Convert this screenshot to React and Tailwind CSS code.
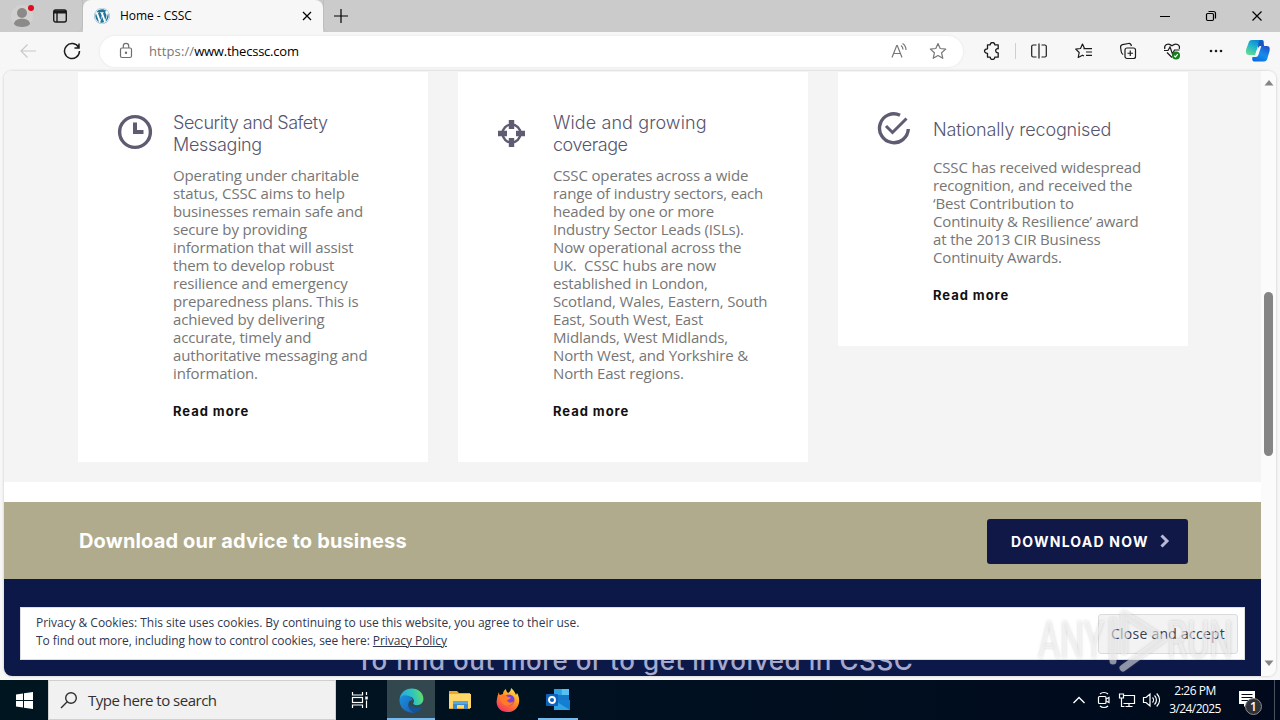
import React from 'react';
import { FaWordpress } from 'react-icons/fa';

const CARDS = [
  {
    id: 'security',
    icon: 'clock',
    title: [['Security and Safety', 'tracking-[-0.48px]'], ['Messaging', 'tracking-[-0.3px]']],
    body: [
      'Operating under charitable', 'status, CSSC aims to help', 'businesses remain safe and', 'secure by providing',
      'information that will assist', 'them to develop robust', 'resilience and emergency', 'preparedness plans. This is',
      'achieved by delivering', 'accurate, timely and', 'authoritative messaging and', 'information.',
    ],
  },
  {
    id: 'coverage',
    icon: 'target',
    title: [['Wide and growing', 'tracking-[0.1px]'], ['coverage', 'tracking-[-0.45px]']],
    body: [
      'CSSC operates across a wide', 'range of industry sectors, each', 'headed by one or more', 'Industry Sector Leads (ISLs).',
      'Now operational across the', 'UK.\u00a0 CSSC hubs are now', 'established in London,', 'Scotland, Wales, Eastern, South',
      'East, South West, East', 'Midlands, West Midlands,', 'North West, and Yorkshire &', 'North East regions.',
    ],
  },
  {
    id: 'recognised',
    icon: 'check',
    title: [['Nationally recognised', 'tracking-[-0.15px]']],
    body: [
      'CSSC has received widespread', 'recognition, and received the', '‘Best Contribution to', 'Continuity & Resilience’ award',
      'at the 2013 CIR Business', 'Continuity Awards.',
    ],
  },
];

const Icon = ({ w = 20, h = w, className = '', children, ...rest }) => (
  <svg width={w} height={h} viewBox={`0 0 ${w} ${h}`} fill="none" stroke="currentColor" strokeWidth="1.2" className={`shrink-0 ${className}`} {...rest}>
    {children}
  </svg>
);

const CardIcon = ({ type }) => {
  if (type === 'clock') {
    return (
      <Icon w={36} className="mt-[42px] ml-[39px]" strokeWidth="3.4">
        <circle cx="18" cy="18" r="15.4" />
        <path d="M18 8.500v9.500h8.500" strokeWidth="4" />
      </Icon>
    );
  }
  if (type === 'target') {
    return (
      <Icon w={36} className="mt-[43px] ml-[35px]" strokeWidth="2.4">
        <circle cx="18.5" cy="18.5" r="9" />
        <path d="M18.5 5v9M18.5 23v9M5 18.5h9M23 18.5h9" strokeWidth="5.4" />
      </Icon>
    );
  }
  return (
    <Icon w={36} className="mt-[39px] ml-[39px]" strokeWidth="3.4">
      <path d="M23 4.2A14.4 14.4 0 1 0 31.3 18" />
      <path d="M9 15l6.500 6.500L29.500 7.500" strokeWidth="3" />
    </Icon>
  );
};

const Card = ({ card }) => {
  const single = card.title.length === 1;
  return (
    <div className={`flex w-[350px] bg-white ${single ? 'h-[274px]' : 'h-[390px]'}`}>
      <div className="w-[95px] shrink-0 text-[#5d5c70]">
        <CardIcon type={card.icon} />
      </div>
      <div className={`whitespace-nowrap ${single ? 'pt-[47px]' : 'pt-10'}`}>
        <h3 className="font-[Inter] text-[18px] leading-[22px] font-light text-[#56556e]">
          {card.title.map(([line, tracking]) => <div key={line} className={tracking}>{line}</div>)}
        </h3>
        <div className={`text-[15px] leading-[18px] tracking-[-0.15px] text-[#767676] ${single ? 'mt-[17px]' : 'mt-[10px]'}`}>
          {card.body.map(line => <div key={line}>{line}</div>)}
        </div>
        <a className="mt-[19px] block font-[Inter] text-[13px] leading-[20px] font-bold tracking-[0.95px] text-[#111]">Read more</a>
      </div>
    </div>
  );
};

const TabStrip = () => (
  <div className="flex h-8 bg-[#cbcbcb]">
    <div className="flex w-[83px] items-center rounded-br-md border-r border-[#bdbdbd]">
      <Icon w={30} className="ml-[8px]" stroke="none">
        <circle cx="14" cy="15" r="11" fill="#d2d1d0" />
        <circle cx="14" cy="12" r="5" fill="#8c8a89" />
        <path d="M6 23c0-7 16-7 16 0-2 4-14 4-16 0z" fill="#8c8a89" />
        <circle cx="23" cy="7" r="3" fill="#e00b1c" />
      </Icon>
      <Icon w={16} className="ml-[14px] text-[#1b1b1b]" strokeWidth="1.4">
        <rect x="1.7" y="2" width="12.6" height="12" rx="2" />
        <path d="M2 4h12" strokeWidth="3" />
        <path d="M5 4v10" />
      </Icon>
    </div>
    <div className="flex w-[240px] items-center rounded-t-lg bg-[#f7f7f7] text-xs text-black">
      <span className="ml-[11px] rounded-full bg-white"><FaWordpress size={16} color="#21759b" /></span>
      <span className="ml-[10px] w-[180px] whitespace-nowrap tracking-[-0.05px]">Home - CSSC</span>
      <Icon w={10} className="ml-[2px]"><path d="M1 1l8 8M9 1L1 9" /></Icon>
    </div>
    <div className="flex flex-1 items-center rounded-bl-md border-l border-[#bdbdbd] pl-[9px]">
      <Icon w={16}><path d="M1 8h14M8 1v14" /></Icon>
    </div>
    <div className="flex w-[138px] items-center text-black">
      <div className="flex w-[46px] justify-center"><Icon w={12}><path d="M1 6.5h10" strokeWidth="1" /></Icon></div>
      <div className="flex w-[46px] justify-center">
        <Icon w={12}>
          <rect x="1.5" y="3.5" width="7" height="7" rx="1.2" />
          <path d="M3.5 1.5H8.5a2 2 0 0 1 2 2v5" />
        </Icon>
      </div>
      <div className="flex w-[46px] justify-center"><Icon w={12}><path d="M1.5 1.5l9 9M10.5 1.5l-9 9" /></Icon></div>
    </div>
  </div>
);

const Star = () => <path d="M9 1.5l2.2 5 5.5.6-4.1 3.7 1.2 5.5L9 13.5l-4.8 2.8 1.2-5.5L1.3 7.1l5.5-.6z" strokeLinejoin="round" />;

const Toolbar = () => (
  <div className="flex h-[38px] items-center bg-[#f7f7f7] text-[#1b1b1b]">
    <Icon w={18} className="ml-[19px] text-[#c8c8c8]"><path d="M17 9H2M8.5 2.5L2 9l6.5 6.5" /></Icon>
    <Icon w={18} className="ml-[26px]" strokeWidth="1.5"><path d="M15.6 5.500A7.500 7.500 0 1 0 16.500 9M16 1.500v4.500h-4.500" /></Icon>
    <div className="ml-[19px] flex h-[31px] w-[863px] items-center rounded-full bg-white shadow-[0_0_2px_1px_rgba(0,0,0,0.04)]">
      <Icon w={14} h={18} className="ml-[19px] text-[#6f6f6f]">
        <rect x="1.5" y="6" width="11" height="9.5" rx="1.5" />
        <path d="M4.3 6V4a2.7 2.7 0 0 1 5.4 0v2" />
        <circle cx="7" cy="10.8" r=".6" fill="currentColor" />
      </Icon>
      <span className="mt-px ml-[16px] w-[741px] text-[13px] whitespace-nowrap text-black">
        <span className="tracking-[0.1px] text-[#777]">https://</span><span className="tracking-[-0.22px]">www.thecssc.com</span>
      </span>
      <Icon w={18} className="text-[#777]">
        <path d="M2 15.500L6.700 3.500h.6l4.700 12M3.700 11.500h6.600M11 3.500c1.500 1 2 2.500 2 4M12.500 1.500c2.500 1.500 3.500 4 3.500 6.500" />
      </Icon>
      <Icon w={18} className="ml-[21px] text-[#777]"><Star /></Icon>
    </div>
    <Icon w={18} className="ml-[20px]" strokeWidth="1.3">
      <path d="M4.500 2.800h2.700a2.300 2.300 0 0 1 4.600 0h3.400v4c-3.400-.8-3.400 4.300 0 4v4.400H11.800a2.300 2.300 0 0 1-4.600 0H4.500V11.300c-4 0-4-4.500 0-4.500z" strokeLinejoin="round" />
    </Icon>
    <div className="ml-[14px] h-4 w-px bg-[#cfcfcf]" />
    <div className="ml-[1px] flex w-11 justify-center">
      <Icon w={18}><path d="M6.5 3H3.200A1.500 1.500 0 0 0 1.700 4.500v9A1.500 1.500 0 0 0 3.200 15H6.500M9 1.500v15M11.500 3h3.300a1.500 1.500 0 0 1 1.500 1.500v9a1.500 1.500 0 0 1-1.500 1.500H11.500" /></Icon>
    </div>
    <div className="ml-px flex w-11 justify-center">
      <Icon w={18}><path d="M9.500 6.500L7.500 2 5.500 6.500l-4.800.6L4.200 10.500l-1 5 4.300-2.300 1.500.8M8.500 6.700H17M11 10h6M11 13.300h6" strokeLinejoin="round" /></Icon>
    </div>
    <div className="flex w-11 justify-center">
      <Icon w={18}>
        <rect x="6" y="6" width="10.500" height="10.500" rx="2" />
        <path d="M11.250 8.500v5.500M8.500 11.250H14M4.200 12.500C3 12 2.500 11 2.300 10L1.600 5.500C1.400 4 2 3 3.500 2.700L9.500 1.500c1.500-.2 2.500.5 3 2.500" />
      </Icon>
    </div>
    <div className="flex w-11 justify-center">
      <Icon w={18}>
        <path d="M1.800 7C.8 3 5 .2 9 3.800 13 .2 17.500 3 16.200 7M4 10.500L9 15.500M1 8.500h4l2-3.500 2.500 7L11.500 8h5" />
        <circle cx="13" cy="13.500" r="4" fill="#14801d" stroke="none" />
        <path d="M11.200 13.700l1.300 1.200 2.300-2.700" stroke="#fff" />
      </Icon>
    </div>
    <div className="flex w-11 justify-center">
      <Icon w={16} stroke="none" fill="currentColor"><circle cx="3" cy="8" r="1.300" /><circle cx="8" cy="8" r="1.300" /><circle cx="13" cy="8" r="1.300" /></Icon>
    </div>
    <svg width="26" height="24" viewBox="0 0 26 24" className="ml-[7px]">
      <defs>
        <linearGradient id="cpA" x1=".8" y1="0" x2=".2" y2="1"><stop stopColor="#087bd5" /><stop offset=".5" stopColor="#21b5cf" /><stop offset="1" stopColor="#65dd8d" /></linearGradient>
        <linearGradient id="cpB" x1=".8" y1="0" x2=".2" y2="1"><stop stopColor="#2450cd" /><stop offset=".5" stopColor="#168ee9" /><stop offset="1" stopColor="#0868e7" /></linearGradient>
      </defs>
      <path d="M7 1h10c2 0 2 2 1.500 3L18 6h-3c-2 0-2.500 2-3 4l-2 6H4C1 16 .5 13 1.300 10L3.500 4C4 2 5 1 7 1z" fill="url(#cpA)" />
      <path d="M19 22.500H9.500C7 22.500 7 20 7.500 18h3c2.500 0 3-2 3.500-4l2.300-7H22c3 0 3 3 2.500 5l-2 7c-.6 2-1.500 3.500-3.500 3.500z" fill="url(#cpB)" />
      <path d="M16 1c2.500 0 2.600 3 3.200 6h-3.500c-2 0-2.700 2-3.200 4l1-7c.3-2 .8-3 2.500-3z" fill="#1758bf" />
    </svg>
  </div>
);

const Scrollbar = () => (
  <div className="flex w-[15px] flex-col items-center bg-[#fbfbfb]">
    <svg width="10" height="6" viewBox="0 0 10 6" className="mt-[9px]"><path d="M5 0l4.500 5.500h-9z" fill="#858585" /></svg>
    <div className="mt-[206px] h-[164px] w-[9px] rounded-full bg-[#858585]" />
    <svg width="10" height="6" viewBox="0 0 10 6" className="mt-[204px]"><path d="M5 6L.5.500h9z" fill="#858585" /></svg>
  </div>
);

const Page = () => (
  <div className="relative flex w-[1257px] flex-col bg-white">
    <div className="flex h-[411px] shrink-0 items-start gap-[30px] bg-[#f4f4f4] pt-px pl-[74px]">
      {CARDS.map(card => <Card key={card.id} card={card} />)}
    </div>
    <div className="mt-5 flex h-[77px] shrink-0 items-center justify-between bg-[#b0ab8d] pr-[73px] pl-[75px]">
      <h2 className="font-[Inter] text-[20px] font-bold tracking-[0.15px] whitespace-nowrap text-white">Download our advice to business</h2>
      <div className="mt-px flex h-[45px] w-[201px] items-center rounded-[3px] bg-[#101848] pl-6 text-white">
        <span className="w-[137px] font-[Inter] text-[14px] font-bold tracking-[1.22px] whitespace-nowrap">DOWNLOAD NOW</span>
        <Icon w={10} h={14} className="ml-[12px] text-[#b9bad6]" strokeWidth="3"><path d="M1.5 1.500L7 7l-5.500 5.500" /></Icon>
      </div>
    </div>
    <div className="flex-1 bg-[#0c1848] pt-[65px] pl-[352px]">
      <div className="font-[Inter] text-[26px] leading-[34px] font-medium tracking-[0.55px] whitespace-nowrap text-[#a6aacd]">To find out more or to get involved in CSSC</div>
    </div>
    {/* Cookie notice floats over the footer */}
    <div className="absolute right-4 bottom-4 left-4 flex h-[53px] items-center justify-between border border-[#dedede] bg-white pr-[6px] pl-[15px] text-xs leading-[18px] text-[#2f3850]">
      <div className="-mt-[3px] whitespace-nowrap">
        <div className="tracking-[-0.02px]">Privacy &amp; Cookies: This site uses cookies. By continuing to use this website, you agree to their use.</div>
        <div className="tracking-[-0.065px]">To find out more, including how to control cookies, see here: <span className="underline">Privacy Policy</span></div>
      </div>
      <button className="h-[40px] w-[140px] rounded-[3px] border border-[#dcdcdc] bg-[#f3f3f3] text-[14px] tracking-[0.25px] whitespace-nowrap text-[#3a4150]">Close and accept</button>
    </div>
  </div>
);

const Watermark = () => (
  <svg width="206" height="68" viewBox="0 0 206 68" className="absolute top-[607px] left-[1036px] [filter:drop-shadow(0_0_1.5px_rgba(90,90,100,0.5))]">
    <g fill="#fff" fillOpacity=".5" fontFamily="Roboto, sans-serif" fontSize="52" fontWeight="400">
      <text x="2" y="51" textLength="66" lengthAdjust="spacingAndGlyphs">ANY</text>
      <text x="131" y="51" textLength="66" lengthAdjust="spacingAndGlyphs">RUN</text>
    </g>
    <g fill="none" stroke="#fff" strokeOpacity=".5" strokeWidth="7" strokeLinejoin="round" strokeLinecap="round">
      <path d="M88 44V7l39 25-40 29" />
      <path d="M77 14v40" />
    </g>
  </svg>
);

const TaskButton = ({ className = 'w-[49px]', children }) => (
  <div className={`flex h-10 items-center justify-center ${className}`}>{children}</div>
);

const Taskbar = () => (
  <div className="flex h-10 items-center bg-linear-to-r from-[#00161f] via-[#001020] to-[#000a1c] text-white">
    <div className="flex w-12 justify-center">
      <svg width="17" height="17" viewBox="0 0 17 17" fill="#fff"><path d="M0 2.500l7-1V8H0zM8 1.300L17 0v8H8zM0 9h7v6.500l-7-1zM8 9h9v8l-9-1.300z" /></svg>
    </div>
    <div className="flex h-10 w-[288px] items-center border border-[#d0d0d0] bg-[#f1f1f1] text-[#303030]">
      <Icon w={18} className="ml-[11px]" strokeWidth="1.4"><circle cx="11" cy="7" r="5.300" /><path d="M7.200 10.800L1 17" /></Icon>
      <span className="ml-[10px] text-[15px] tracking-[-0.5px] whitespace-nowrap">Type here to search</span>
    </div>
    <div className="flex w-[51px] justify-center pr-[4px]">
      <Icon w={18} strokeWidth="1.2">
        <path d="M1.500 1v3h10V1M1.500 17v-3h10v3M15.500 1v3M15.500 9.500V17" />
        <rect x="1.500" y="6.500" width="10" height="5" />
        <path d="M15.500 5.500v3" strokeWidth="2.500" />
      </Icon>
    </div>
    <TaskButton className="w-[48px] border-b-2 border-[#76b9ed] bg-[#33474f] pt-[2px]">
      <svg width="25" height="25" viewBox="0 0 256 256">
        <defs>
          <linearGradient id="edA" x1="0" y1=".5" x2="1" y2=".3"><stop stopColor="#2aa5df" /><stop offset=".55" stopColor="#2cc5c0" /><stop offset="1" stopColor="#69df62" /></linearGradient>
          <linearGradient id="edB" x1="0" y1="0" x2="1" y2="1"><stop stopColor="#1b91dc" /><stop offset="1" stopColor="#1a5eb6" /></linearGradient>
        </defs>
        <path d="M6 120C10 50 65 5 130 5c70 0 120 46 120 105 0 40-30 66-67 66-30 0-42-12-36-24 15-12 8-60-42-66-48-4-90 10-99 34z" fill="url(#edA)" />
        <path d="M5 128c2-42 42-66 91-48 26 9 42 30 46 50-16-11-40 2-45 28-8 42 26 86 73 93-85 17-165-42-165-123z" fill="url(#edB)" />
        <path d="M98 158c-10 44 25 87 72 93 27-8 51-27 68-53 4-7-2-10-8-7-51 23-124-2-132-33z" fill="#155397" />
      </svg>
    </TaskButton>
    <TaskButton>
      <svg width="24" height="22" viewBox="0 0 24 22">
        <path d="M1 2h8l2 2h11v16H1z" fill="#e9a72c" />
        <path d="M1 5h22v14H1z" fill="#ffd768" />
        <path d="M5 12h15v8h-4v-4H9v4H5z" fill="#3c8bcc" />
        <path d="M5 12h15v3H5z" fill="#5ba6dc" />
      </svg>
    </TaskButton>
    <TaskButton>
      <svg width="25" height="26" viewBox="0 0 25 26">
        <defs><linearGradient id="fx" x1=".8" y1="0" x2=".2" y2="1"><stop stopColor="#fff04a" /><stop offset=".45" stopColor="#ff8b21" /><stop offset="1" stopColor="#f22d67" /></linearGradient></defs>
        <path d="M3 5c0 2 .5 3 1 3l3-1c0-2 1-4 3-5 0 2 1 3 2 4 2-1 3-3 3-5 3 2 4 5 5 7l1-2c5 8 1 18-8 19C5 26-1 20 1 12c.3-2 1-5 2-7z" fill="url(#fx)" />
        <circle cx="13" cy="13" r="5.500" fill="#7a40d8" />
        <path d="M4 9c3-2 6-1 8 1l3 .5c-1 2-3 2-4 3 1 2 4 3 7 1-2 5-10 6-13 0-1-2-1-4-1-5.500z" fill="#ff7b29" />
      </svg>
    </TaskButton>
    <TaskButton className="ml-[5px] w-[40px] border-b-2 border-[#76b9ed] pt-[2px]">
      <svg width="25" height="24" viewBox="0 0 25 24">
        <path d="M8 1h15v17H8z" fill="#1678c8" />
        <path d="M8 1h7.500v6H8z" fill="#2da2e2" /><path d="M15.500 1H23v6h-7.500z" fill="#51c2f3" />
        <path d="M8 12h16v10H8z" fill="#127fd2" /><path d="M8 12l16 10H8z" fill="#32a5e7" />
        <rect y="6" width="12" height="12" rx="1" fill="#0f62ba" />
        <circle cx="6" cy="12" r="3" fill="none" stroke="#fff" strokeWidth="1.900" />
      </svg>
    </TaskButton>
    <div className="ml-auto flex items-center">
      <Icon w={14}><path d="M1.500 10L7 4.500l5.500 5.500" strokeWidth="1.400" /></Icon>
      <Icon w={14} h={18} className="ml-[11px]"><rect x="1.500" y="5.500" width="7.500" height="7" rx="1" /><path d="M9 8l3-1.500v5L9 10M3 3C5 1 9 1 11 3M3 15c2 2 6 2 8 0" /></Icon>
      <Icon w={18} className="ml-[7px]"><path d="M5.500 4.500h11v8h-11M11 12.500v3M7.500 15.500h7M1.500 3h4v4h-4zM3.500 7v8.500h3" /></Icon>
      <Icon w={18} className="ml-[6px]"><path d="M1.500 6.500H4L8 3v12l-4-3.500H1.500zM10.500 6.500c1.300 1.300 1.300 3.700 0 5M12.500 4.500c2.600 2.500 2.600 6.500 0 9M14.700 2.500c3.700 4 3.700 9 0 13" /></Icon>
      <div className="ml-[6px] w-[58px] text-center text-xs leading-[18px] tracking-[-0.5px] whitespace-nowrap">
        <div>2:26 PM</div>
        <div className="tracking-[-0.58px]">3/24/2025</div>
      </div>
      <div className="relative ml-[14px] h-[30px] w-[26px]">
        <Icon w={20} className="mt-[5px]" stroke="none"><path d="M1 1h16v13H9l-3 3v-3H1z" fill="#fff" /><path d="M3.500 4.500h11M3.500 7.500h11M3.500 10.500h8" stroke="#000a1c" strokeWidth="1.200" /></Icon>
        <span className="absolute top-[13px] left-[7px] flex size-[17px] items-center justify-center rounded-full border border-[#8a8a8a] bg-[#2e3138] text-[12px] font-semibold">1</span>
      </div>
      <div className="ml-[10px] h-10 w-px bg-[#4a505c]" />
      <div className="w-[5px]" />
    </div>
  </div>
);

export default function App() {
  return (
    <div className="relative flex h-[720px] w-[1280px] flex-col overflow-hidden bg-[#f7f7f7] font-['Open_Sans',sans-serif]">
      <TabStrip />
      <Toolbar />
      <div className="mt-px mr-[4px] mb-[4px] ml-[4px] flex h-[605px] overflow-hidden rounded-lg shadow-[0_0_2px_1px_rgba(0,0,0,0.1)]">
        <Page />
        <Scrollbar />
      </div>
      <Taskbar />
      <Watermark />
    </div>
  );
}
